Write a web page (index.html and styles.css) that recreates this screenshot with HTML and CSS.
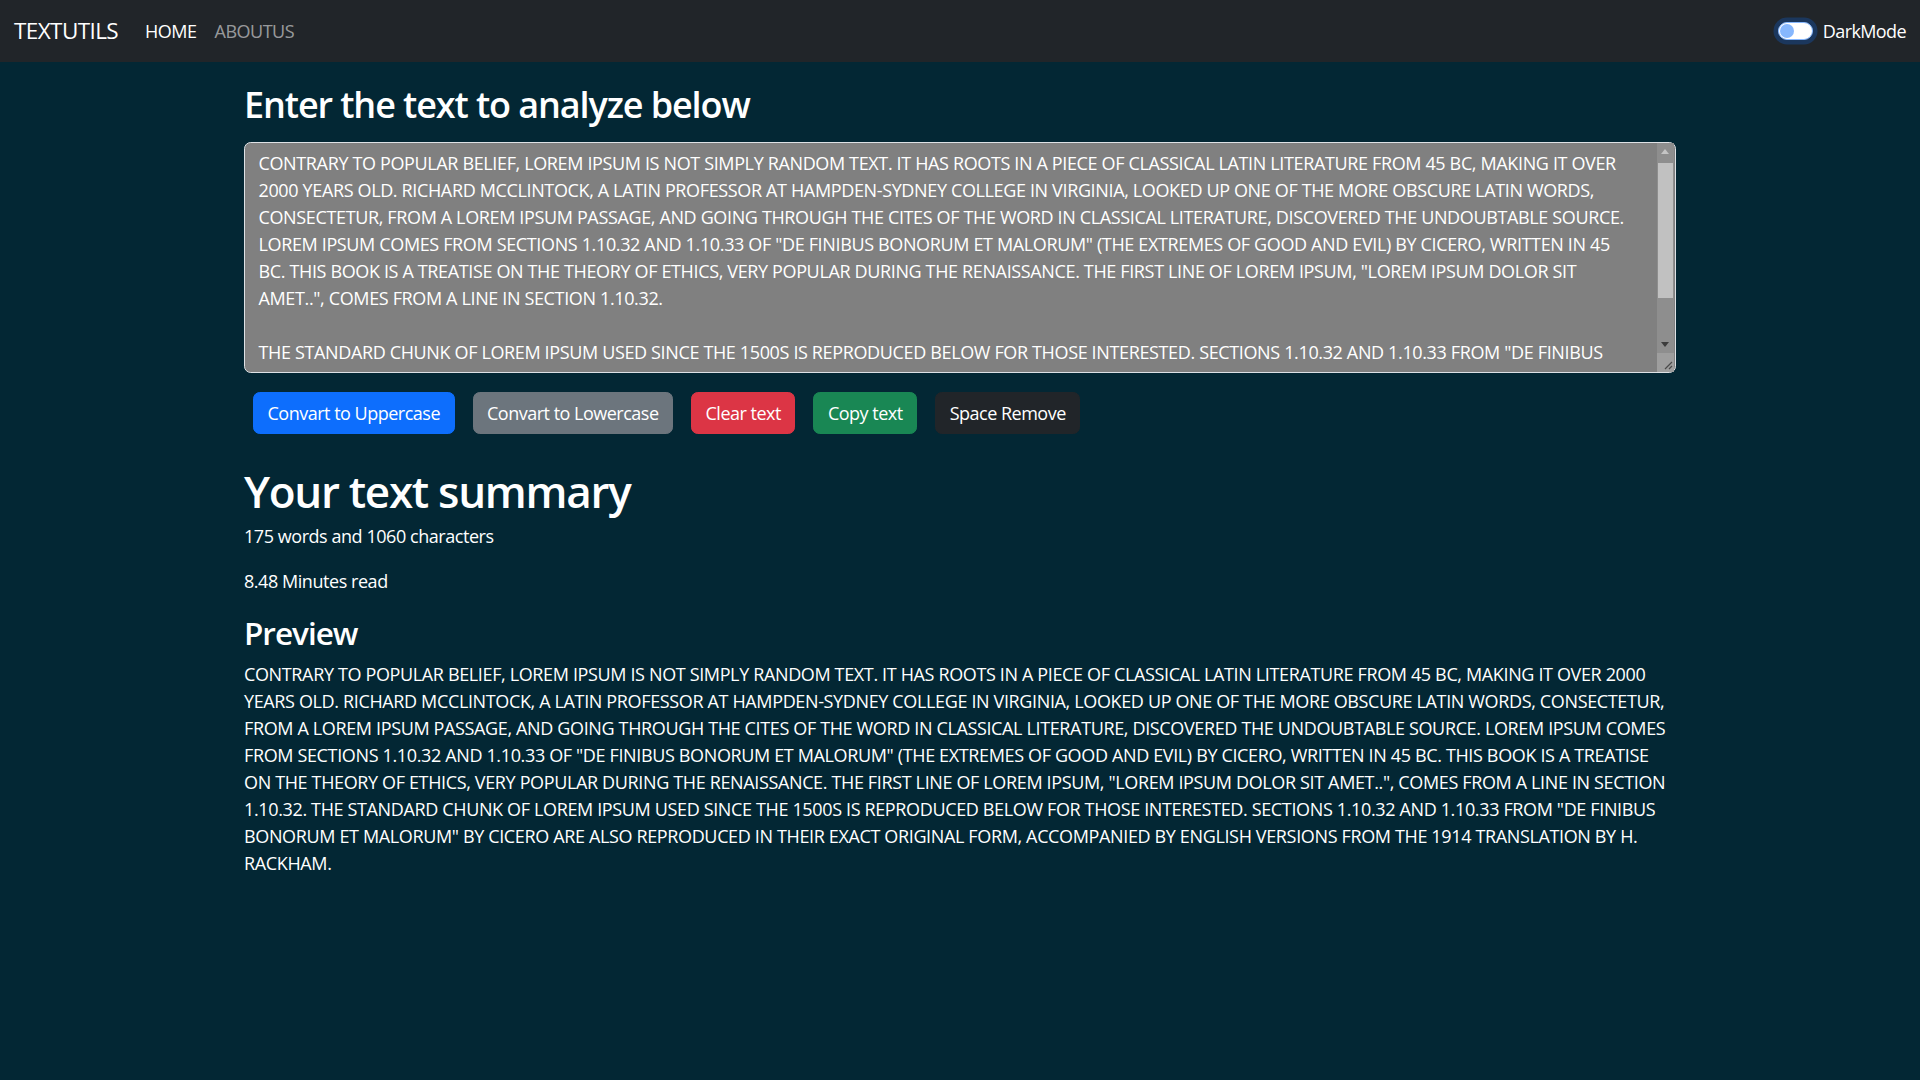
FILE: index.html
```html
<!DOCTYPE html>
<html lang="en">
<head>
<meta charset="utf-8">
<title>TextUtils - Home</title>
<link rel="stylesheet" href="styles.css">
</head>
<body>
<nav class="navbar">
  <div class="nav-left">
    <a class="brand" href="#">TEXTUTILS</a>
    <ul class="nav-links">
      <li><a class="nav-link active" href="#">HOME</a></li>
      <li><a class="nav-link" href="#">ABOUTUS</a></li>
    </ul>
  </div>
  <div class="mode">
    <span class="switch"></span>
    <label class="mode-label">DarkMode</label>
  </div>
</nav>

<main class="container">
  <h2 class="title">Enter the text to analyze below</h2>
  <div class="text-wrap">
    <textarea class="textbox" rows="8">CONTRARY TO POPULAR BELIEF, LOREM IPSUM IS NOT SIMPLY RANDOM TEXT. IT HAS ROOTS IN A PIECE OF CLASSICAL LATIN LITERATURE FROM 45 BC, MAKING IT OVER 2000 YEARS OLD. RICHARD MCCLINTOCK, A LATIN PROFESSOR AT HAMPDEN-SYDNEY COLLEGE IN VIRGINIA, LOOKED UP ONE OF THE MORE OBSCURE LATIN WORDS, CONSECTETUR, FROM A LOREM IPSUM PASSAGE, AND GOING THROUGH THE CITES OF THE WORD IN CLASSICAL LITERATURE, DISCOVERED THE UNDOUBTABLE SOURCE. LOREM IPSUM COMES FROM SECTIONS 1.10.32 AND 1.10.33 OF "DE FINIBUS BONORUM ET MALORUM" (THE EXTREMES OF GOOD AND EVIL) BY CICERO, WRITTEN IN 45 BC. THIS BOOK IS A TREATISE ON THE THEORY OF ETHICS, VERY POPULAR DURING THE RENAISSANCE. THE FIRST LINE OF LOREM IPSUM, "LOREM IPSUM DOLOR SIT AMET..", COMES FROM A LINE IN SECTION 1.10.32.

THE STANDARD CHUNK OF LOREM IPSUM USED SINCE THE 1500S IS REPRODUCED BELOW FOR THOSE INTERESTED. SECTIONS 1.10.32 AND 1.10.33 FROM "DE FINIBUS BONORUM ET MALORUM" BY CICERO ARE ALSO REPRODUCED IN THEIR EXACT ORIGINAL FORM, ACCOMPANIED BY ENGLISH VERSIONS FROM THE 1914 TRANSLATION BY H. RACKHAM.</textarea>
    <div class="scrollbar" aria-hidden="true">
      <span class="sb-btn sb-up"></span>
      <span class="sb-track"><span class="sb-thumb"></span></span>
      <span class="sb-btn sb-down"></span>
      <span class="sb-corner">
        <svg width="10" height="10" viewBox="0 0 10 10"><path d="M9 2 L2 9 M9 6 L6 9" stroke="#4a4a4a" stroke-width="1.2" fill="none"/></svg>
      </span>
    </div>
  </div>
  <div class="actions">
    <button class="btn btn-primary">Convart to Uppercase</button>
    <button class="btn btn-secondary">Convart to Lowercase</button>
    <button class="btn btn-danger">Clear text</button>
    <button class="btn btn-success">Copy text</button>
    <button class="btn btn-dark">Space Remove</button>
  </div>
</main>

<section class="container summary">
  <h1 class="summary-title">Your text summary</h1>
  <p class="stat">175 words and 1060 characters</p>
  <p class="stat">8.48 Minutes read</p>
  <h3 class="preview-title">Preview</h3>
  <p class="preview">CONTRARY TO POPULAR BELIEF, LOREM IPSUM IS NOT SIMPLY RANDOM TEXT. IT HAS ROOTS IN A PIECE OF CLASSICAL LATIN LITERATURE FROM 45 BC, MAKING IT OVER 2000 YEARS OLD. RICHARD MCCLINTOCK, A LATIN PROFESSOR AT HAMPDEN-SYDNEY COLLEGE IN VIRGINIA, LOOKED UP ONE OF THE MORE OBSCURE LATIN WORDS, CONSECTETUR, FROM A LOREM IPSUM PASSAGE, AND GOING THROUGH THE CITES OF THE WORD IN CLASSICAL LITERATURE, DISCOVERED THE UNDOUBTABLE SOURCE. LOREM IPSUM COMES FROM SECTIONS 1.10.32 AND 1.10.33 OF "DE FINIBUS BONORUM ET MALORUM" (THE EXTREMES OF GOOD AND EVIL) BY CICERO, WRITTEN IN 45 BC. THIS BOOK IS A TREATISE ON THE THEORY OF ETHICS, VERY POPULAR DURING THE RENAISSANCE. THE FIRST LINE OF LOREM IPSUM, "LOREM IPSUM DOLOR SIT AMET..", COMES FROM A LINE IN SECTION 1.10.32. THE STANDARD CHUNK OF LOREM IPSUM USED SINCE THE 1500S IS REPRODUCED BELOW FOR THOSE INTERESTED. SECTIONS 1.10.32 AND 1.10.33 FROM "DE FINIBUS BONORUM ET MALORUM" BY CICERO ARE ALSO REPRODUCED IN THEIR EXACT ORIGINAL FORM, ACCOMPANIED BY ENGLISH VERSIONS FROM THE 1914 TRANSLATION BY H. RACKHAM.</p>
</section>
</body>
</html>
```

FILE: styles.css
```css
* { box-sizing: border-box; }

html, body {
  margin: 0;
  padding: 0;
}

body {
  background: #032734;
  color: #ffffff;
  font-family: "Open Sans", "Noto Sans", "Liberation Sans", sans-serif;
  font-size: 18px;
  line-height: 27px;
  letter-spacing: -0.45px;
  min-height: 1080px;
}

/* ---------- navbar ---------- */
.navbar {
  height: 62px;
  background: #212529;
  display: flex;
  align-items: center;
  justify-content: space-between;
  padding: 0 14px 0 14px;
}

.nav-left {
  display: flex;
  align-items: center;
}

.brand {
  color: #ffffff;
  text-decoration: none;
  font-size: 22.5px;
  line-height: 34px;
  letter-spacing: -0.6px;
  margin-right: 18px;
}

.nav-links {
  list-style: none;
  margin: 0;
  padding: 0;
  display: flex;
}

.nav-link {
  display: block;
  padding: 9px 9px;
  color: rgba(255, 255, 255, 0.55);
  text-decoration: none;
  font-size: 18px;
  line-height: 27px;
  letter-spacing: -0.5px;
}

.nav-link.active {
  color: #ffffff;
}

.mode {
  display: flex;
  align-items: center;
  gap: 10px;
}

.switch {
  position: relative;
  width: 35px;
  height: 18px;
  border-radius: 9px;
  background: #ffffff;
  border: 1px solid #86b7fe;
  box-shadow: 0 0 0 4.5px rgba(13, 110, 253, 0.25);
}

.switch::before {
  content: "";
  position: absolute;
  left: 1px;
  top: 1px;
  width: 14px;
  height: 14px;
  border-radius: 50%;
  background: #86b7fe;
}

.mode-label {
  font-size: 18px;
  color: #ffffff;
  letter-spacing: -0.6px;
}

/* ---------- main ---------- */
.container {
  width: 1432px;
  margin: 0 auto;
}

.title {
  font-size: 36px;
  line-height: 43px;
  font-weight: 600;
  letter-spacing: -1.1px;
  margin: 21px 0 16px 0;
}

.text-wrap {
  position: relative;
}

.textbox {
  display: block;
  width: 100%;
  height: 231px;
  background: #808080;
  color: #ffffff;
  border: 1px solid #dee2e6;
  border-radius: 6.75px;
  padding: 7px 42px 7px 13.5px;
  font-family: inherit;
  font-size: 18px;
  line-height: 27px;
  letter-spacing: -0.36px;
  resize: none;
  overflow: hidden;
  outline: none;
  scrollbar-width: none;
}

.scrollbar {
  position: absolute;
  top: 1px;
  bottom: 1px;
  right: 2px;
  width: 17px;
  display: flex;
  flex-direction: column;
  background: #8e8e8e;
}

.sb-btn {
  position: relative;
  height: 17px;
  flex: none;
}

.sb-btn::before {
  content: "";
  position: absolute;
  left: 4px;
  width: 0;
  height: 0;
  border-left: 4.5px solid transparent;
  border-right: 4.5px solid transparent;
}

.sb-up::before {
  top: 6px;
  border-bottom: 5px solid #c4c4c4;
}

.sb-down::before {
  top: 6px;
  border-top: 5px solid #3c3c3c;
}

.sb-track {
  flex: 1;
  padding: 3px 1px 0 1px;
}

.sb-thumb {
  display: block;
  height: 135px;
  background: #c1c1c1;
}

.sb-corner {
  height: 19px;
  flex: none;
  background: #9e9e9e;
  display: flex;
  align-items: flex-end;
  justify-content: flex-end;
  padding: 0 1px 2px 0;
}

.actions {
  display: flex;
  gap: 18px;
  margin: 19px 0 0 9px;
}

.btn {
  font-family: inherit;
  font-size: 18px;
  line-height: 27px;
  letter-spacing: -0.5px;
  padding: 6.5px 13.5px;
  border-radius: 6.75px;
  color: #ffffff;
  border: 1px solid transparent;
  cursor: pointer;
}

.btn-primary { background: #0d6efd; border-color: #0d6efd; }
.btn-secondary { background: #6c757d; border-color: #6c757d; }
.btn-danger { background: #dc3545; border-color: #dc3545; }
.btn-success { background: #198754; border-color: #198754; }
.btn-dark { background: #212529; border-color: #212529; }

/* ---------- summary ---------- */
.summary {
  margin-top: 30px;
}

.summary-title {
  font-size: 44px;
  line-height: 54px;
  font-weight: 600;
  letter-spacing: -1.3px;
  margin: 0 0 5px 0;
}

.stat {
  margin: 0 0 18px 0;
}

.stat + .stat {
  margin-bottom: 19px;
}

.preview-title {
  font-size: 31.5px;
  line-height: 38px;
  font-weight: 600;
  letter-spacing: -1px;
  margin: 0 0 9px 0;
}

.preview {
  margin: 0;
  letter-spacing: -0.36px;
}
```
